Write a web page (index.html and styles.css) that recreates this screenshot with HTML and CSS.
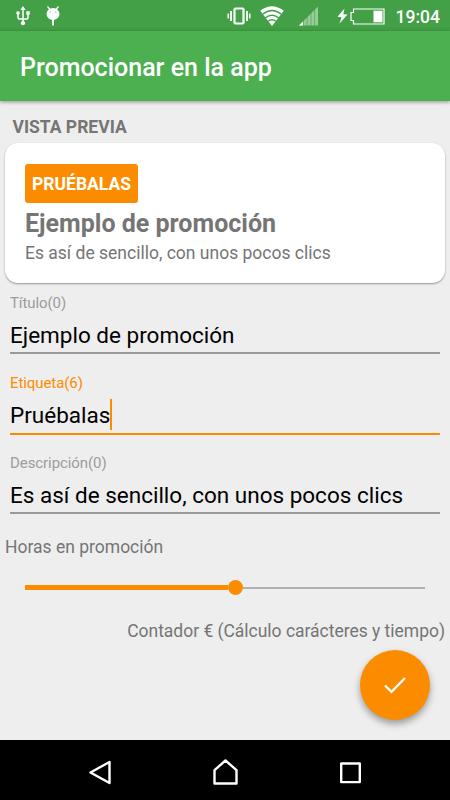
FILE: index.html
```html
<!DOCTYPE html>
<html lang="es">
<head>
<meta charset="utf-8">
<title>Promocionar en la app</title>
<link rel="stylesheet" href="styles.css">
</head>
<body>
<div class="screen">
  <div class="status">
    <svg class="usb" width="14" height="20" viewBox="0 0 14 20" fill="none" stroke="#fff" stroke-width="1.5"><path d="M7 3v14M2 7v4.200q0 1.800 1.800 1.800h6.400q1.800 0 1.800-1.800V7"/><g fill="#fff" stroke="none"><path d="M7 0l2.600 4H4.400z"/><circle cx="7" cy="17.200" r="2.100"/><circle cx="2" cy="7" r="1.800"/><path d="M10.300 5.300h3.400v3.400h-3.400z"/></g></svg>
    <svg class="droid" width="14" height="20" viewBox="0 0 14 20"><path d="M1.500.5l2.500 3M12.500.5l-2.500 3" stroke="#fff" stroke-width="1.200"/><ellipse cx="7" cy="8" rx="6.500" ry="6" fill="#fff"/><path d="M7 13v6.500" stroke="#fff" stroke-width="2"/><circle cx="4.300" cy="6" r=".6" fill="#43a047"/><circle cx="9.700" cy="6" r=".6" fill="#43a047"/></svg>
    <svg class="vibrate" width="24" height="20" viewBox="0 0 24 20" fill="none" stroke="#fff"><rect x="7.500" y="2.500" width="9" height="15" rx="1" stroke-width="2.200"/><path d="M4 5v10M20 5v10" stroke-width="1.800"/><path d="M1.200 7.500v5M22.800 7.500v5" stroke-width="1.400"/></svg>
    <svg class="wifi" width="24" height="20" viewBox="0 0 24 20"><path d="M12 20L.2 4.800Q12-4.400 23.800 4.800z" fill="#fff"/><g fill="none" stroke="#43a047" stroke-width="1.400"><path d="M2.500 8.300q9.500-7.500 19 0M5.300 11.900q6.700-5.200 13.400 0M8 15.300q4-3 8 0"/></g></svg>
    <svg class="signal" width="20" height="20" viewBox="0 0 20 20"><path d="M0 19.500L19 .5v19z" fill="#fff" opacity=".45"/><path d="M0 19.500l4-4v4z" fill="#fff"/><path d="M4.500 14v6M8.200 10v10M12 7v13M15.600 3v17" stroke="#43a047" stroke-width=".6"/></svg>
    <svg class="bolt" width="11" height="16" viewBox="0 0 11 16"><path d="M7.500.5L.5 8.800l4 .4-2 6.300 8-9-4.200-.3z" fill="#fff"/></svg>
    <svg class="battery" width="35" height="17" viewBox="0 0 35 17"><path d="M3.500 1h30.500v15H3.500v-3.500H1v-8h2.500z" fill="none" stroke="#fff" stroke-width="1.200"/><path d="M23.500 2.700h9v11.600h-9z" fill="#fff"/></svg>
    <span class="clock">19:04</span>
  </div>
  <header class="appbar">Promocionar en la app</header>
  <main class="content">
    <h2 class="section">VISTA PREVIA</h2>
    <section class="card">
      <span class="tag">PRUÉBALAS</span>
      <h3 class="card-title">Ejemplo de promoción</h3>
      <p class="card-text">Es así de sencillo, con unos pocos clics</p>
    </section>
    <div class="field">
      <label class="label">Título(0)</label>
      <div class="value">Ejemplo de promoción</div>
    </div>
    <div class="field active">
      <label class="label">Etiqueta(6)</label>
      <div class="value">Pruébalas<span class="caret"></span></div>
    </div>
    <div class="field">
      <label class="label">Descripción(0)</label>
      <div class="value">Es así de sencillo, con unos pocos clics</div>
    </div>
    <p class="hours">Horas en promoción</p>
    <div class="slider"><span class="filled"></span><span class="thumb"></span><span class="rest"></span></div>
    <p class="counter">Contador € (Cálculo carácteres y tiempo)</p>
    <button class="fab" aria-label="Aceptar"><svg width="24" height="20" viewBox="0 0 24 20" fill="none" stroke="#fff" stroke-width="2.300"><path d="M2 10.500l6.500 6.300L22 3"/></svg></button>
  </main>
  <nav class="navbar">
    <svg width="30" height="30" viewBox="0 0 30 30"><path d="M5.500 15.500L24.500 5v21z"/></svg>
    <svg width="30" height="30" viewBox="0 0 30 30"><path d="M4.500 13.200l11-9.700 11 9.700V26.500h-22z"/></svg>
    <svg width="30" height="30" viewBox="0 0 30 30"><path d="M6.200 6.500h18.600v18.600H6.200z"/></svg>
  </nav>
</div>
</body>
</html>
```

FILE: styles.css
```css
* { box-sizing: border-box; }
body, h2, h3, p { margin: 0; }
body { font-family: Roboto, sans-serif; background: #eee; }
.screen { display: flex; flex-direction: column; width: 450px; height: 800px; overflow: hidden; font-size: 17.5px; color: #757575; }
.status { display: flex; align-items: center; height: 31px; flex: none; background: #43a047; color: #fff; padding: 1px 10px 0 16px; }
.status svg { flex: none; display: block; }
.droid { margin-left: 16px; }
.vibrate { margin-left: 166.500px; }
.wifi { margin-left: 9.500px; }
.signal { margin-left: 15px; }
.bolt { margin-left: 17.500px; }
.battery { margin-left: 2.500px; }
.clock { margin-left: auto; font-size: 17.5px; font-weight: 500; line-height: 30px; padding-top: 1px; }
.appbar { position: relative; flex: none; height: 70px; padding: 0 20px; background: #4caf50; color: #fff; font-size: 25px; font-weight: 500; line-height: 73px; box-shadow: 0 1px 4px rgba(0, 0, 0, .4); }
.content { position: relative; flex: 1; padding: 16px 5px 0; }
.section { padding-left: 7.5px; font-size: 17.5px; font-weight: 700; line-height: 21px; }
.card { height: 140px; margin-top: 5px; padding: 20.500px 20px 0; border-radius: 13px; background: #fff; box-shadow: 0 1px 2px rgba(0, 0, 0, .38); }
.tag { display: block; width: 113px; height: 39px; border-radius: 3px; background: #fb8c00; color: #fff; font-weight: 700; line-height: 41px; text-align: center; }
.card-title { margin-top: 6px; font-size: 25px; font-weight: 700; line-height: 30px; }
.card-text { margin-top: 4px; line-height: 21px; }
.field { height: 80px; margin: 0 5px; padding-top: 10px; }
.label { display: block; color: #9c9c9c; font-size: 15px; line-height: 20px; letter-spacing: -.08px; }
.value { display: flex; align-items: center; height: 41px; padding-top: 4px; border-bottom: 2px solid #999; color: #000; font-size: 22.5px; }
.active .value { height: 42px; border-bottom: 2px solid #fb8c00; }
.active .label { color: #fb8c00; }
.caret { width: 2px; height: 31px; margin-top: -2px; background: #fb8c00; }
.hours { margin-top: 14px; line-height: 21px; }
.slider { display: flex; align-items: center; height: 15px; margin: 22px 20px 0; }
.filled { width: 203px; height: 5px; background: #fb8c00; }
.thumb { width: 15px; height: 15px; border-radius: 50%; background: #fb8c00; }
.rest { flex: 1; height: 2px; background: #b0b0b0; }
.counter { margin-top: 26px; line-height: 21px; text-align: right; letter-spacing: -.02px; }
.fab { position: absolute; right: 20px; bottom: 20px; display: flex; align-items: center; justify-content: center; width: 70px; height: 70px; padding: 0; border: 0; border-radius: 50%; background: #fb8c00; box-shadow: 0 4px 7px rgba(0, 0, 0, .35); }
.navbar { display: flex; align-items: center; justify-content: center; gap: 95px; flex: none; height: 60px; padding-top: 4px; background: #000; }
.navbar path { fill: none; stroke: #fff; stroke-width: 2.400; stroke-linejoin: round; }
```
